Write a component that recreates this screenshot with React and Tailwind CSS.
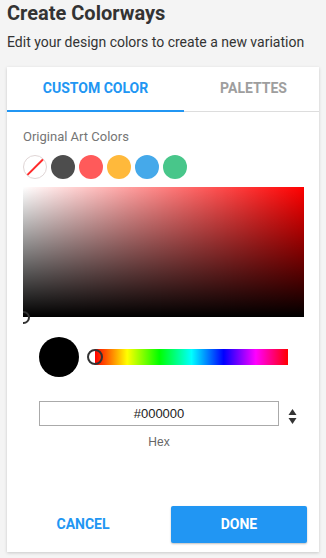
import { useState } from "react";

const swatches = ["#4d4d4d", "#ff5a5a", "#ffb93b", "#45a9ea", "#48c68a"];

function Spinner() {
  return (
    <svg width="9" height="20" viewBox="0 0 9 20" className="ml-[9px]">
      <path d="M4.5 5 L8.5 11 L0.5 11 Z" fill="#333" />
      <path d="M0.5 14 L8.5 14 L4.5 20 Z" fill="#333" />
    </svg>
  );
}

export default function App() {
  const [tab, setTab] = useState("custom");
  const [hex, setHex] = useState("#000000");

  return (
    <div className="min-h-[558px] bg-[#f4f4f4] font-['Roboto',sans-serif] px-[7px] pt-[1px]">
      <h1 className="text-[20px] leading-[24px] font-bold text-[#333]">Create Colorways</h1>
      <p className="mt-[7px] text-[14px] leading-[20px] text-[#333]">
        Edit your design colors to create a new variation
      </p>

      <div className="mt-[15px] w-[312px] h-[485px] bg-white shadow-[0_1px_3px_rgba(0,0,0,0.18)] flex flex-col">
        {/* tabs */}
        <div className="flex h-[45px] border-b border-[#ddd]">
          <button
            onClick={() => setTab("custom")}
            className={`w-[177px] -mb-px flex items-center justify-center text-[14px] font-bold border-b-2 ${
              tab === "custom" ? "text-[#2196f3] border-[#2196f3]" : "text-[#9e9e9e] border-transparent"
            }`}
          >
            CUSTOM COLOR
          </button>
          <button
            onClick={() => setTab("palettes")}
            className={`flex-1 -mb-px flex items-center justify-center pl-[4px] text-[14px] font-bold border-b-2 ${
              tab === "palettes" ? "text-[#2196f3] border-[#2196f3]" : "text-[#9e9e9e] border-transparent"
            }`}
          >
            PALETTES
          </button>
        </div>

        <div className="pl-[16px] pr-[15px] pt-[17px]">
          <div className="text-[13px] leading-[16px] text-[#757575]">Original Art Colors</div>

          <div className="mt-[10px] flex gap-[4px]">
            <div className="relative w-[24px] h-[24px] rounded-full border border-[#e0d6d6] overflow-hidden">
              <div className="absolute left-1/2 top-1/2 w-[26px] h-[1.5px] bg-[#ff2a2a] -translate-x-1/2 -translate-y-1/2 -rotate-45" />
            </div>
            {swatches.map((c) => (
              <div key={c} className="w-[24px] h-[24px] rounded-full" style={{ backgroundColor: c }} />
            ))}
          </div>

          {/* saturation */}
          <div className="relative mt-[8px] w-[281px] h-[130px] bg-[#f00]">
            <div className="absolute inset-0 bg-[linear-gradient(to_right,#fff,rgba(255,255,255,0))]" />
            <div className="absolute inset-0 bg-[linear-gradient(to_top,#000,rgba(0,0,0,0))]" />
            <div className="absolute left-0 top-[124px] w-[7px] h-[13px] overflow-hidden">
              <div className="w-[13px] h-[13px] -ml-[6px] rounded-full border-2 border-[#333]" />
            </div>
          </div>
        </div>

        {/* preview + hue */}
        <div className="mt-[20px] pl-[32px] flex items-center">
          <div className="w-[40px] h-[40px] rounded-full bg-black" />
          <div className="relative ml-[16px] w-[193px] h-[16px] bg-[linear-gradient(to_right,#f00,#ff0,#0f0,#0ff,#00f,#f0f,#f00)]">
            <div className="absolute -left-[8px] top-0 w-[16px] h-[16px] rounded-full border-2 border-[#333]" />
          </div>
        </div>

        {/* hex input */}
        <div className="mt-[24px] pl-[32px] flex items-center">
          <input
            value={hex}
            onChange={(e) => setHex(e.target.value)}
            className="w-[240px] h-[25px] border border-[#aaa] text-center text-[13px] text-[#222] font-['Liberation_Sans',sans-serif] outline-none"
          />
          <Spinner />
        </div>
        <div className="w-[240px] ml-[32px] mt-[8px] text-center text-[12px] leading-[16px] text-[#666] font-['Liberation_Sans',sans-serif]">
          Hex
        </div>

        {/* actions */}
        <div className="mt-auto mb-[9px] pl-[8px] pr-[12px] flex gap-[20px]">
          <button className="w-[136px] h-[37px] text-[14px] font-bold text-[#2196f3]">CANCEL</button>
          <button className="w-[136px] h-[37px] rounded-[2px] bg-[#2196f3] text-white text-[14px] font-bold shadow-[0_1px_2px_rgba(0,0,0,0.25)]">
            DONE
          </button>
        </div>
      </div>
    </div>
  );
}
